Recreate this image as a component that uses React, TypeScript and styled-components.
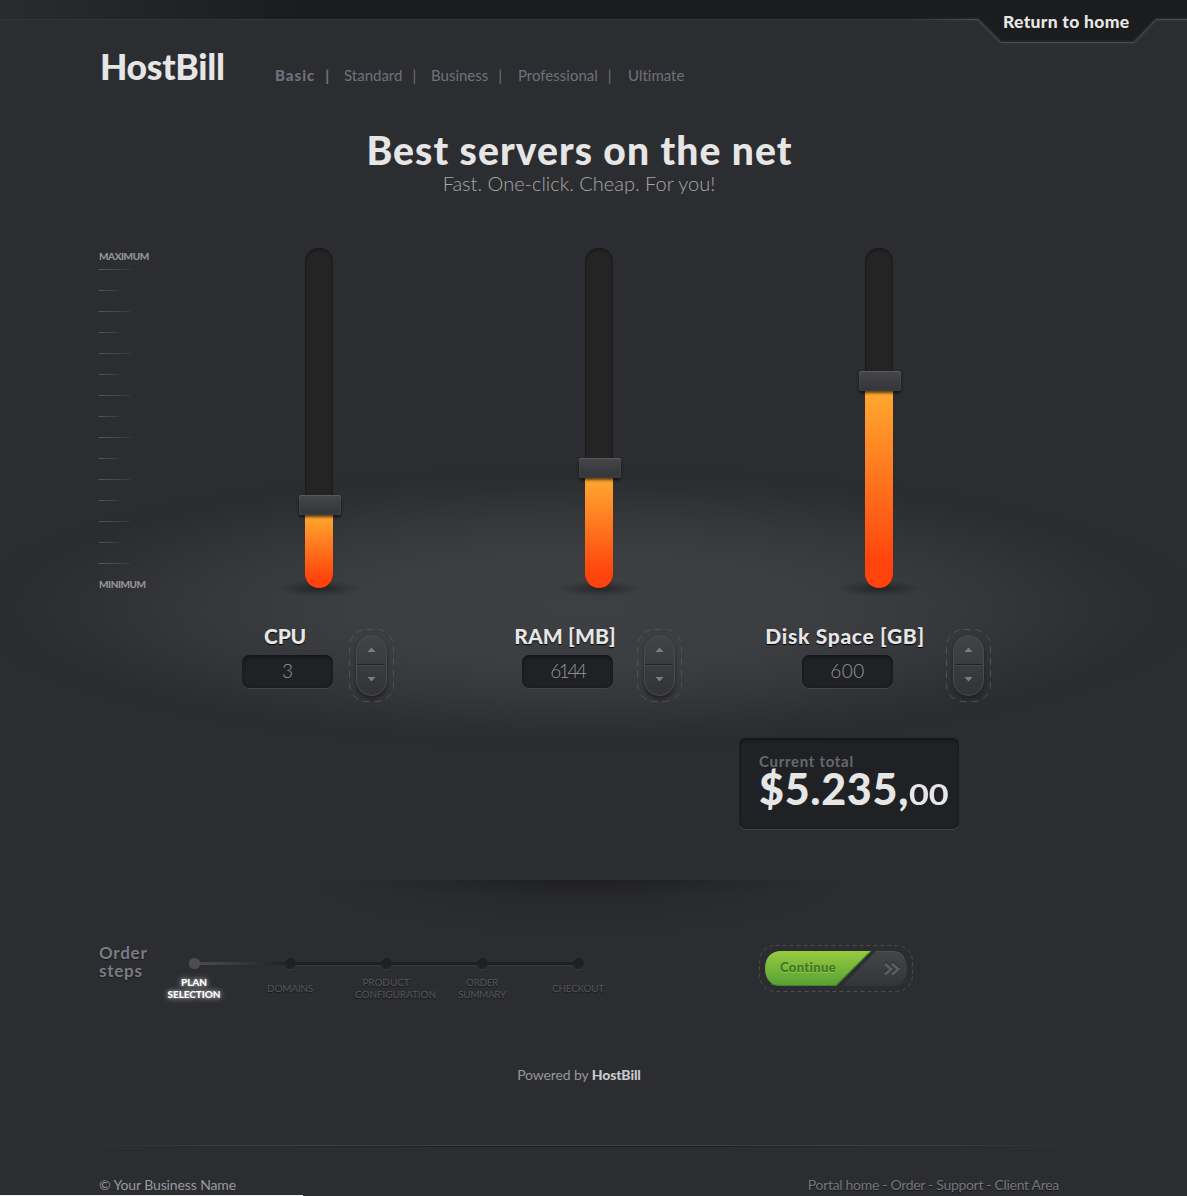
import React from 'react';
import styled, { createGlobalStyle, css } from 'styled-components';

const GlobalStyle = createGlobalStyle`
  * { box-sizing: border-box; }
  html, body { margin: 0; background: #2c2d31; }
  body { font-family: Lato, "Open Sans", sans-serif; color: #e6e6e6; font-variant-ligatures: none; }
  a { color: inherit; text-decoration: none; }
`;

const Page = styled.div`
  position: relative;
  height: 1196px;
  overflow: hidden;
  background:
    radial-gradient(ellipse 630px 146px at 585px 608px, #3e3f42 0%, rgba(61, 62, 65, 0.95) 40%, rgba(57, 58, 61, 0.75) 62%, rgba(48, 49, 52, 0.5) 82%, rgba(41, 42, 45, 0.5) 94%, rgba(44, 45, 49, 0) 100%),
    #2c2d31;
`;

const TopBar = styled.div`
  height: 20px;
  background: linear-gradient(90deg, #2a2b2f 0, #1b1c1e 300px);
  border-bottom: 1px solid #33343a;
`;

const HomeTab = styled.div`
  position: absolute;
  top: 0;
  right: 0;
  width: 287px;
  height: 56px;
`;

const TabShape = styled.svg`
  display: block;
`;

const HomeLink = styled.a`
  position: absolute;
  left: 103px;
  top: 11px;
  font-size: 17.5px;
  font-weight: 900;
  line-height: 22px;
  letter-spacing: 0.3px;
  white-space: nowrap;
`;

const Container = styled.div`
  width: 960px;
  margin-left: 99px;
`;

const Header = styled.header`
  display: flex;
  height: 106px;
  padding-top: 26px;
`;

const Logo = styled.h1`
  width: 176px;
  margin: 0;
  padding-left: 1px;
  font-size: 35.5px;
  font-weight: 900;
  line-height: 42px;
  letter-spacing: -0.3px;
`;

const Nav = styled.nav`
  display: flex;
  padding-top: 19px;
  line-height: 20px;
  font-size: 15px;
  color: #70717b;
`;

const NavItem = styled.a<{ $width: number; $active?: boolean }>`
  display: flex;
  gap: 10px;
  width: ${p => p.$width}px;
  font-weight: ${p => (p.$active ? 900 : 400)};
  letter-spacing: ${p => (p.$active ? 1 : 0)}px;
`;

const Hero = styled.section`
  height: 122px;
  padding-top: 1px;
  text-align: center;
`;

const Title = styled.h2`
  margin: 0 0 -1px 1px;
  font-size: 39px;
  font-weight: 900;
  line-height: 46px;
  letter-spacing: 1.08px;
`;

const Subtitle = styled.p`
  margin: 0;
  font-size: 20px;
  font-weight: 300;
  line-height: 22px;
  color: #a8a8a8;
`;

const Configurator = styled.section`
  display: flex;
  height: 454px;
`;

const Scale = styled.div`
  flex: none;
  width: 140px;
  padding-top: 2px;
`;

const ScaleLabel = styled.div`
  font-size: 10px;
  font-weight: 900;
  line-height: 12px;
  letter-spacing: -0.45px;
  color: #949494;
`;

const Ticks = styled.div`
  display: grid;
  gap: 20px;
  margin: 7px 0 14px;
`;

const Tick = styled.span<{ $long: boolean }>`
  height: 1px;
  width: ${p => (p.$long ? 32 : 20)}px;
  background: linear-gradient(90deg, #55565a, rgba(70, 71, 75, 0.35));
`;

const Column = styled.div`
  flex: none;
  width: 280px;
`;

const Track = styled.div`
  position: relative;
  display: flex;
  align-items: flex-end;
  width: 28px;
  height: 340px;
  margin-left: 66px;
  border-radius: 14px;
  background: #242424;
  box-shadow: inset 0 2px 3px #1a1a1a, inset 1px 0 1px #1f1f1f, inset -1px 0 1px #1f1f1f;

  &::before {
    content: '';
    position: absolute;
    left: -28px;
    bottom: -8px;
    width: 84px;
    height: 15px;
    z-index: -1;
    background: radial-gradient(closest-side, rgba(22, 22, 24, 0.6), rgba(30, 30, 32, 0));
  }
`;

const TrackLayer = styled.div`
  position: relative;
  z-index: 0;
`;

const Fill = styled.div`
  width: 100%;
  border-radius: 0 0 14px 14px;
  background: linear-gradient(#ffa930, #ff430c 88%);
`;

const Handle = styled.div`
  position: absolute;
  left: -6px;
  width: 42px;
  height: 20px;
  border-radius: 3px;
  background: linear-gradient(#45464a, #343539);
  box-shadow: inset 0 1px 0 #5a5a5c, inset 0 0 2px #58595b, 0 2px 3px rgba(0, 0, 0, 0.65);
`;

const Control = styled.div<{ $width: number }>`
  display: flex;
  gap: 16px;
  width: ${p => p.$width + 61}px;
  margin: 35px 0 0 ${p => 48.5 - p.$width / 2}px;
`;

const Field = styled.div`
  display: flex;
  flex: 1;
  flex-direction: column;
  align-items: center;
  gap: 6px;
`;

const FieldLabel = styled.label<{ $spacing: number }>`
  padding-right: 5px;
  font-size: 21px;
  font-weight: 900;
  line-height: 26px;
  white-space: nowrap;
  letter-spacing: ${p => p.$spacing}px;
  text-shadow: 0 1px 1px #000;
`;

const inset = css`
  background: #202125;
  box-shadow: inset 0 2px 3px #151618, inset 0 0 2px #1a1b1d, 0 1px 0 #434448;
`;

const Value = styled.div<{ $spacing: number }>`
  width: 91px;
  height: 33px;
  border-radius: 8px;
  font-size: 19px;
  font-weight: 300;
  line-height: 31px;
  text-align: center;
  color: #96979b;
  letter-spacing: ${p => p.$spacing}px;
  ${inset}
`;

const Spinner = styled.svg`
  flex: none;
  display: block;
  margin-top: 6px;
`;

const Total = styled.div`
  width: 220px;
  height: 91px;
  margin: 36px 0 51px 640px;
  padding: 15px 0 0 20px;
  border-radius: 7px;
  white-space: nowrap;
  ${inset}
`;

const TotalLabel = styled.div`
  font-size: 15px;
  font-weight: 700;
  line-height: 16px;
  letter-spacing: 0.7px;
  color: #67686e;
`;

const Price = styled.div`
  display: flex;
  align-items: baseline;
  font-size: 43px;
  font-weight: 900;
  line-height: 40px;
  letter-spacing: 0.7px;
`;

const Cents = styled.span`
  font-size: 29px;
  font-weight: 700;
  letter-spacing: 0;
  transform: scaleX(1.18);
  transform-origin: left;
`;

const Order = styled.section`
  display: flex;
  height: 186px;
  padding-top: 63px;
  background:
    radial-gradient(ellipse 250px 16px at 481px 0, rgba(28, 28, 28, 0.6), rgba(30, 31, 33, 0.35) 50%, rgba(44, 45, 49, 0)),
    radial-gradient(ellipse 280px 60px at 481px 0, rgba(28, 28, 29, 0.5), rgba(33, 34, 36, 0.25) 50%, rgba(44, 45, 49, 0));
`;

const OrderTitle = styled.div`
  width: 47px;
  padding-top: 1px;
  font-size: 17px;
  font-weight: 700;
  line-height: 18px;
  letter-spacing: 0.75px;
  color: #7b7c82;
  text-shadow: 0 1px 1px #1a1a1c;
`;

const Steps = styled.div`
  display: flex;
  padding-top: 15px;
`;

const Step = styled.div`
  display: flex;
  flex-direction: column;
  align-items: center;
  width: 96px;
`;

const railShape = {
  start: css`
    background: linear-gradient(90deg, #4d4c4b, #38383a) right 4px / 50% 3px no-repeat;
  `,
  fade: css`
    background:
      linear-gradient(90deg, #38383a, #1f2023) left 4px / 50% 3px no-repeat,
      linear-gradient(#1f2023, #1f2023) right 4px / 50% 3px no-repeat,
      linear-gradient(#38393d, #38393d) right 7px / 50% 1px no-repeat;
  `,
  full: css`
    background:
      linear-gradient(#1f2023, #1f2023) left 4px / 100% 3px no-repeat,
      linear-gradient(#38393d, #38393d) left 7px / 100% 1px no-repeat;
  `,
  end: css`
    background:
      linear-gradient(#1f2023, #1f2023) left 4px / 50% 3px no-repeat,
      linear-gradient(#38393d, #38393d) left 7px / 50% 1px no-repeat;
  `,
};

const Rail = styled.div<{ $kind: keyof typeof railShape }>`
  display: flex;
  justify-content: center;
  width: 100%;
  height: 12px;
  ${p => railShape[p.$kind]}
`;

const Dot = styled.span<{ $active: boolean }>`
  width: 11px;
  height: 11px;
  border-radius: 50%;
  background: ${p => (p.$active ? '#4d4d4d' : '#1f2023')};
  box-shadow: ${p => (p.$active ? '0 0 1px #4d4d4d' : '0 1px 0 #36373b')};
`;

const StepLabel = styled.div<{ $active: boolean; $spacing: number }>`
  display: flex;
  flex-direction: column;
  justify-content: center;
  width: 62px;
  height: 24px;
  margin-top: 6px;
  font-size: 10px;
  line-height: 12px;
  text-align: center;
  font-weight: ${p => (p.$active ? 900 : 400)};
  letter-spacing: ${p => p.$spacing}px;
  color: ${p => (p.$active ? '#fff' : '#55565a')};
  text-shadow: ${p => (p.$active ? '0 0 6px rgba(255,255,255,.75), 0 0 3px rgba(255,255,255,.35)' : '0 1px 1px #17181a')};
`;

const ContinueFrame = styled.div`
  position: relative;
  width: 154px;
  height: 47px;
  margin: 2px 146px 0 auto;
`;

const ButtonArt = styled.svg`
  display: block;
`;

const ContinueText = styled.span`
  position: absolute;
  left: 21px;
  top: 14px;
  font-size: 13px;
  font-weight: 900;
  line-height: 16px;
  letter-spacing: 0.35px;
  color: #3e7623;
  text-shadow: 0 1px 0 #94ca52;
`;

const Powered = styled.div`
  height: 79px;
  text-align: center;
  font-size: 14px;
  line-height: 18px;
  letter-spacing: -0.13px;
  color: #96979a;

  b { font-weight: 900; color: #c9c9cb; }
`;

const Divider = styled.div`
  height: 2px;
  background:
    linear-gradient(90deg, #303135, #3e3f43 15%, #3e3f43 85%, #303135) top / 100% 1px no-repeat,
    linear-gradient(90deg, transparent, #1e1f21 40%, #1e1f21 60%, transparent) bottom / 100% 1px no-repeat;
`;

const Footer = styled.footer`
  display: flex;
  justify-content: space-between;
  padding-top: 29px;
  font-size: 14px;
  line-height: 18px;
`;

const Copyright = styled.span`
  letter-spacing: -0.12px;
  color: #999a9d;
`;

const FooterLinks = styled.span`
  letter-spacing: -0.31px;
  color: #75767a;
  text-shadow: 0 1px 0 #161618;
`;

const StatusStrip = styled.div`
  position: absolute;
  left: 0;
  bottom: 0;
  width: 303px;
  height: 1px;
  background: #f2f2f2;
`;

const plans = [
  { name: 'Basic', width: 69 },
  { name: 'Standard', width: 87 },
  { name: 'Business', width: 87 },
  { name: 'Professional', width: 110 },
  { name: 'Ultimate', width: 60 },
];

const resources = [
  { name: 'CPU', value: '3', level: 83, width: 91, spacing: -0.3, digits: 0 },
  { name: 'RAM [MB]', value: '6144', level: 120, width: 107, spacing: 0.15, digits: -2.4 },
  { name: 'Disk Space [GB]', value: '600', level: 207, width: 165, spacing: 0.68, digits: 0.4 },
];

const steps: { lines: string[]; spacing: number; rail: keyof typeof railShape }[] = [
  { lines: ['PLAN', 'SELECTION'], spacing: -0.07, rail: 'start' },
  { lines: ['DOMAINS'], spacing: -0.25, rail: 'fade' },
  { lines: ['PRODUCT', 'CONFIGURATION'], spacing: -0.08, rail: 'full' },
  { lines: ['ORDER', 'SUMMARY'], spacing: -0.4, rail: 'full' },
  { lines: ['CHECKOUT'], spacing: -0.3, rail: 'end' },
];

function ReturnHome() {
  return (
    <HomeTab>
      <TabShape width="287" height="56" viewBox="0 0 287 56">
        <defs>
          <linearGradient id="edge" gradientUnits="userSpaceOnUse" x1="0" y1="0" x2="80" y2="0">
            <stop offset="0" stopColor="#484950" stopOpacity="0" />
            <stop offset="1" stopColor="#4b4c53" />
          </linearGradient>
        </defs>
        <path d="M0 0H287V19H256L234 42.5H101L78 19H0Z" fill="#1b1c1e" />
        <path d="M0 19.5H78L101 42.5H234L256 19.5H287" fill="none" stroke="url(#edge)" strokeWidth="4" opacity=".22" />
        <path d="M0 19.5H78L101 42.5H234L256 19.5H287" fill="none" stroke="url(#edge)" />
      </TabShape>
      <HomeLink href="#">Return to home</HomeLink>
    </HomeTab>
  );
}

function Stepper() {
  return (
    <Spinner width="45" height="74" viewBox="0 0 45 74">
      <defs>
        <linearGradient id="pill" x1="0" y1="0" x2="0" y2="1">
          <stop offset="0" stopColor="#424346" />
          <stop offset="1" stopColor="#323337" />
        </linearGradient>
        <filter id="soft" x="-30%" y="-30%" width="160%" height="160%">
          <feGaussianBlur stdDeviation="1.5" />
        </filter>
      </defs>
      <rect x=".5" y=".5" width="44" height="72" rx="17" fill="none" stroke="#505155" strokeDasharray="7 5" />
      <rect x="7" y="8" width="31" height="62" rx="15.5" fill="#1b1b1d" opacity=".7" filter="url(#soft)" />
      <rect x="7.5" y="6.5" width="30" height="60" rx="15" fill="url(#pill)" stroke="#4b4b4d" />
      <path d="M9 35.5H36" stroke="#222224" />
      <path d="M9 36.5H36" stroke="#48494b" />
      <path d="M18.5 23H26.5L22.5 18.5Z M18.5 48H26.5L22.5 52.5Z" fill="#7b7c85" />
    </Spinner>
  );
}

function ContinueButton() {
  return (
    <ContinueFrame>
      <ButtonArt width="154" height="47" viewBox="0 0 154 47">
        <defs>
          <linearGradient id="green" x1="0" y1="0" x2="0" y2="1">
            <stop offset="0" stopColor="#98ca3f" />
            <stop offset="1" stopColor="#57a034" />
          </linearGradient>
          <linearGradient id="gray" x1="0" y1="0" x2="0" y2="1">
            <stop offset="0" stopColor="#444548" />
            <stop offset="1" stopColor="#343539" />
          </linearGradient>
        </defs>
        <rect x=".5" y=".5" width="153" height="46" rx="16" fill="none" stroke="#4b4c50" strokeDasharray="4 3" />
        <path d="M117 6H133C142 6 148 13 148 23.500C148 34 142 41 133 41H83Z" fill="url(#gray)" />
        <path d="M117 6.500H133C139 6.500 143 9 145 12" fill="none" stroke="#515255" />
        <path d="M22 6H112L77 41H22C12 41 6 34 6 23.500C6 13 12 6 22 6Z" fill="url(#green)" />
        <path d="M12 38.500C15 40.500 18 40.500 22 40.500H77L112 6" fill="none" stroke="#42822a" strokeWidth="1.200" />
        <path d="M126 17.500L132 23L126 28.500M133 17.500L139 23L133 28.500" fill="none" stroke="#242527" strokeWidth="2.800" />
        <path d="M126 18.500L132 24L126 29.500M133 18.500L139 24L133 29.500" fill="none" stroke="#5c5d61" strokeWidth="2.800" />
      </ButtonArt>
      <ContinueText>Continue</ContinueText>
    </ContinueFrame>
  );
}

export default function App() {
  return (
    <>
      <GlobalStyle />
      <Page>
        <TopBar />
        <ReturnHome />
        <Container>
          <Header>
            <Logo>HostBill</Logo>
            <Nav>
              {plans.map((plan, i) => (
                <NavItem key={plan.name} href="#" $width={plan.width} $active={i === 0}>
                  {plan.name}
                  {i < plans.length - 1 && <span>|</span>}
                </NavItem>
              ))}
            </Nav>
          </Header>
          <Hero>
            <Title>Best servers on the net</Title>
            <Subtitle>Fast. One-click. Cheap. For you!</Subtitle>
          </Hero>
          <Configurator>
            <Scale>
              <ScaleLabel>MAXIMUM</ScaleLabel>
              <Ticks>
                {Array.from({ length: 15 }, (_, i) => (
                  <Tick key={i} $long={i % 2 === 0} />
                ))}
              </Ticks>
              <ScaleLabel>MINIMUM</ScaleLabel>
            </Scale>
            {resources.map(r => (
              <Column key={r.name}>
                <TrackLayer>
                  <Track>
                    <Fill style={{ height: r.level - 10 }} />
                    <Handle style={{ bottom: r.level - 10 }} />
                  </Track>
                </TrackLayer>
                <Control $width={r.width}>
                  <Field>
                    <FieldLabel $spacing={r.spacing}>{r.name}</FieldLabel>
                    <Value $spacing={r.digits}>{r.value}</Value>
                  </Field>
                  <Stepper />
                </Control>
              </Column>
            ))}
          </Configurator>
          <Total>
            <TotalLabel>Current total</TotalLabel>
            <Price>
              $5.235,<Cents>00</Cents>
            </Price>
          </Total>
          <Order>
            <OrderTitle>Order steps</OrderTitle>
            <Steps>
              {steps.map((s, i) => (
                <Step key={s.lines[0]}>
                  <Rail $kind={s.rail}>
                    <Dot $active={i === 0} />
                  </Rail>
                  <StepLabel $active={i === 0} $spacing={s.spacing}>
                    {s.lines.map(line => (
                      <span key={line}>{line}</span>
                    ))}
                  </StepLabel>
                </Step>
              ))}
            </Steps>
            <ContinueButton />
          </Order>
          <Powered>
            Powered by <b>HostBill</b>
          </Powered>
          <Divider />
          <Footer>
            <Copyright>© Your Business Name</Copyright>
            <FooterLinks>Portal home - Order - Support - Client Area</FooterLinks>
          </Footer>
        </Container>
        <StatusStrip />
      </Page>
    </>
  );
}
